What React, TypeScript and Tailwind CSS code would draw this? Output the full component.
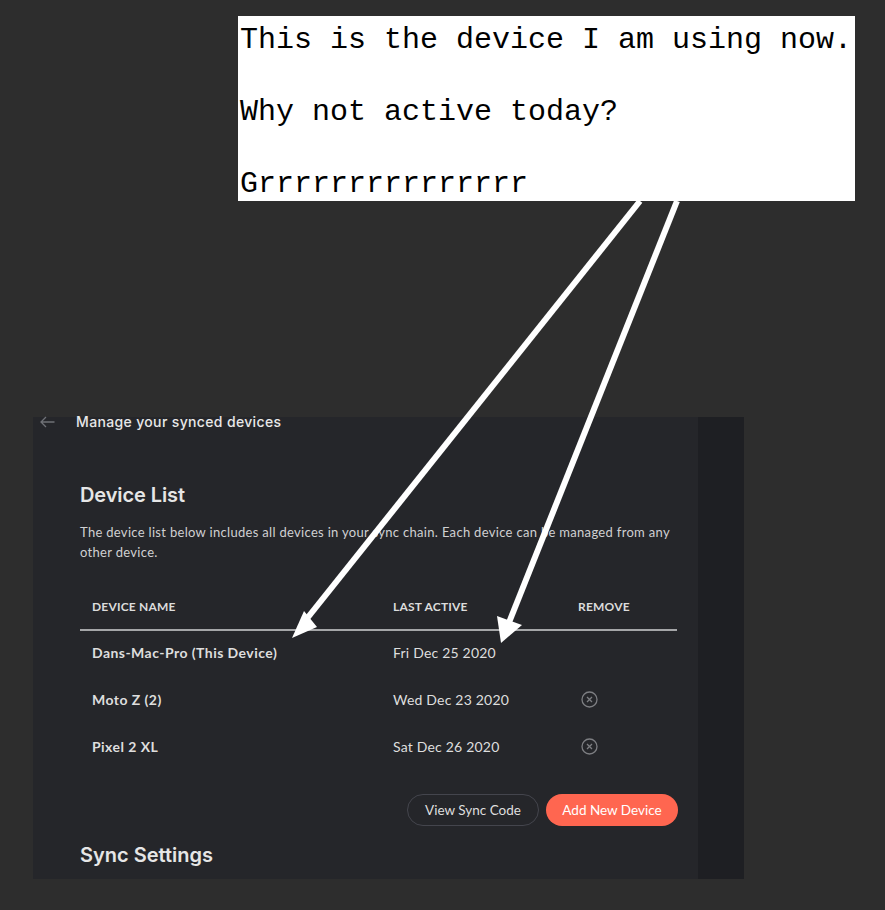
const DEVICES = [
  { name: "Dans-Mac-Pro (This Device)", active: "Fri Dec 25 2020", removable: false },
  { name: "Moto Z (2)", active: "Wed Dec 23 2020", removable: true },
  { name: "Pixel 2 XL", active: "Sat Dec 26 2020", removable: true },
];

function RemoveIcon() {
  return (
    <svg width="17" height="17" viewBox="0 0 17 17" fill="none" stroke="#7d7e82" strokeWidth="1.3">
      <circle cx="8.5" cy="8.5" r="7.5" />
      <path d="M6 6l5 5M11 6l-5 5" />
    </svg>
  );
}

function Arrows() {
  return (
    <svg className="absolute left-0 top-0" width="885" height="910" viewBox="0 0 885 910">
      <path d="M640 201L305 621" stroke="#fff" strokeWidth="6" />
      <path d="M292 638L317 627L304 611Z" fill="#fff" />
      <path d="M677 201L508 625" stroke="#fff" strokeWidth="6" />
      <path d="M501 643L522 625L497 616Z" fill="#fff" />
    </svg>
  );
}

export default function App() {
  return (
    <div className="relative h-[910px] w-[885px] overflow-hidden bg-[#2d2d2d] pt-4 font-['Lato',sans-serif]">
      <div className="ml-[238px] h-[185px] w-[617px] bg-white pl-0.5 pt-[6px] font-['Liberation_Mono',monospace] text-[30px] leading-9 text-black">
        <p>This is the device I am using now.</p>
        <p className="mt-9">Why not active today?</p>
        <p className="mt-9">Grrrrrrrrrrrrrrr</p>
      </div>

      <div className="ml-[33px] mt-[216px] flex h-[462px] w-[711px] bg-[#25262a]">
        <div className="w-[665px]">
          <div className="flex h-[9px] items-center pl-[7px]">
            <svg width="15" height="12" viewBox="0 0 15 12" fill="none" stroke="#6f7176" strokeWidth="1.3">
              <path d="M14.5 6H1M6 1L1 6l5 5" />
            </svg>
            <span className="ml-[21px] font-['Inter',sans-serif] text-[14px] font-medium tracking-[0.35px] whitespace-nowrap text-[#e8e8e8]">
              Manage your synced devices
            </span>
          </div>

          <div className="ml-[47px] w-[597px]">
            <h2 className="mt-[57px] font-['Inter',sans-serif] text-[20px] leading-6 font-semibold tracking-[-0.1px] text-[#e6e6e6]">
              Device List
            </h2>
            <p className="mt-[15px] w-[595px] text-[13px] leading-5 tracking-[0.31px] text-[#d0d0d2]">
              The device list below includes all devices in your sync chain. Each device can be managed from any other
              device.
            </p>

            <div className="mt-9 grid h-[33px] grid-cols-[301px_185px_1fr] border-b-2 border-[#a5a6a8] pl-3 text-[12px] font-bold tracking-[0.2px] text-[#dcdcdc]">
              <span>DEVICE NAME</span>
              <span>LAST ACTIVE</span>
              <span>REMOVE</span>
            </div>

            <div className="-mt-0.5">
              {DEVICES.map((d) => (
                <div key={d.name} className="grid h-[47px] grid-cols-[301px_185px_1fr] items-center pl-3 text-[#dedede]">
                  <span className="text-[14px] font-bold tracking-[0.45px]">{d.name}</span>
                  <span className="text-[14px] tracking-[0.2px]">{d.active}</span>
                  <span className="pl-[3px]">{d.removable && <RemoveIcon />}</span>
                </div>
              ))}
            </div>

            <div className="-mr-px mt-6 flex justify-end gap-[7px] text-[13.5px]">
              <button className="h-8 w-[132px] rounded-full border border-[#44454d] text-[#dedede]">View Sync Code</button>
              <button className="h-8 w-[132px] rounded-full bg-[#ff6650] text-white">Add New Device</button>
            </div>

            <h2 className="mt-[17px] font-['Inter',sans-serif] text-[20px] leading-6 font-semibold text-[#e6e6e6]">
              Sync Settings
            </h2>
          </div>
        </div>
        <div className="flex-1 bg-[#1e1f23]" />
      </div>

      <Arrows />
    </div>
  );
}
